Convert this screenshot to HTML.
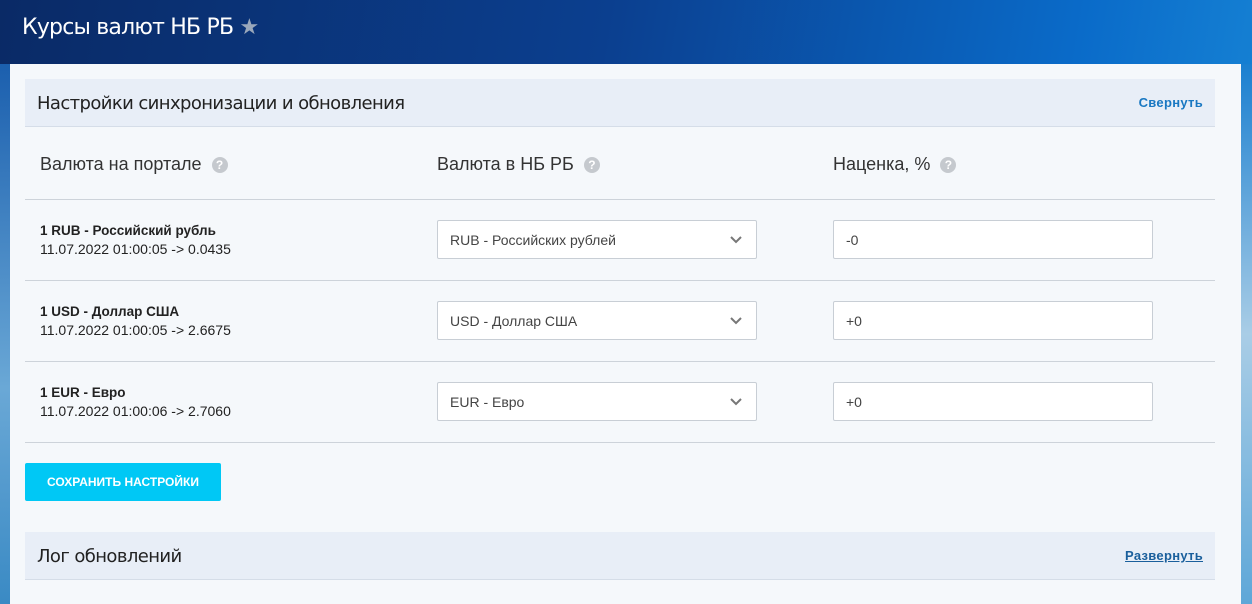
<!DOCTYPE html>
<html><head><meta charset="utf-8"><style>
*{box-sizing:border-box;margin:0;padding:0}
body{width:1252px;height:604px;overflow:hidden;font-family:"Liberation Sans",sans-serif;background:linear-gradient(100deg,#0a2a66 0%,#0b3f8f 45%,#0a6bc9 80%,#1a8ad8 100%);position:relative}
.side{position:absolute;left:0;top:64px;width:10px;height:540px;background:linear-gradient(#1b5fae,#6aa8d6 60%,#3a8ac4)}
.side2{position:absolute;right:0;top:64px;width:11px;height:540px;background:linear-gradient(#1a7fd0,#a9cde6 50%,#5ea7d8)}
h1{position:absolute;left:22px;top:15px;color:#fff;font-weight:normal;font-size:22px;font-family:"DejaVu Sans","Liberation Sans",sans-serif;letter-spacing:-0.8px}
.card{position:absolute;left:10px;top:64px;width:1231px;height:540px;background:#f5f8fb}
.hd{position:absolute;left:15px;width:1190px;height:48px;background:#e8eef7;border-bottom:1px solid #d5dde8}
.hd span{position:absolute;left:12px;top:14px;font-size:18px;color:#222;font-family:"DejaVu Sans",sans-serif;letter-spacing:-0.6px}
.hd a{position:absolute;right:12px;top:16px;font-size:13px;font-weight:bold;color:#1a78c2;letter-spacing:0.3px}
.col{position:absolute;top:90px;font-size:18px;color:#333}
.q{display:inline-block;width:16px;height:16px;border-radius:50%;background:#c5c9ce;color:#fff;font-size:12px;font-weight:bold;text-align:center;line-height:16px;margin-left:10px;vertical-align:1px}
.line{position:absolute;left:15px;width:1190px;height:1px;background:#cdd3da}
.nm{position:absolute;left:30px;font-size:14px;color:#222;line-height:19px}
.nm b{font-weight:bold;font-size:13.5px}
.sel,.inp{position:absolute;width:320px;height:39px;background:#fff;border:1px solid #c8ced5;border-radius:2px;font-size:14px;color:#444;padding:11px 12px}
.sel svg{position:absolute;right:14px;top:15px}
.btn{position:absolute;left:15px;top:399px;width:196px;height:38px;background:#00c8f5;border-radius:2px;color:#fff;font-weight:bold;font-size:12px;text-align:center;line-height:38px}
</style></head><body>
<div class="side"></div><div class="side2"></div>
<h1>Курсы валют НБ РБ <span style="color:#9aa8bb;font-size:22px">★</span></h1>
<div class="card">
<div class="hd" style="top:15px"><span>Настройки синхронизации и обновления</span><a>Свернуть</a></div>
<div class="col" style="left:30px">Валюта на портале<span class="q">?</span></div>
<div class="col" style="left:427px">Валюта в НБ РБ<span class="q">?</span></div>
<div class="col" style="left:823px">Наценка, %<span class="q">?</span></div>
<div class="line" style="top:135px"></div>
<div class="nm" style="top:157px"><b>1 RUB - Российский рубль</b><br>11.07.2022 01:00:05 -&gt; 0.0435</div>
<div class="sel" style="left:427px;top:156px">RUB - Российских рублей<svg width="12" height="8"><path d="M1 1l5 5 5-5" stroke="#777" stroke-width="2" fill="none"/></svg></div>
<div class="inp" style="left:823px;top:156px">-0</div>
<div class="line" style="top:216px"></div>
<div class="nm" style="top:238px"><b>1 USD - Доллар США</b><br>11.07.2022 01:00:05 -&gt; 2.6675</div>
<div class="sel" style="left:427px;top:237px">USD - Доллар США<svg width="12" height="8"><path d="M1 1l5 5 5-5" stroke="#777" stroke-width="2" fill="none"/></svg></div>
<div class="inp" style="left:823px;top:237px">+0</div>
<div class="line" style="top:297px"></div>
<div class="nm" style="top:319px"><b>1 EUR - Евро</b><br>11.07.2022 01:00:06 -&gt; 2.7060</div>
<div class="sel" style="left:427px;top:318px">EUR - Евро<svg width="12" height="8"><path d="M1 1l5 5 5-5" stroke="#777" stroke-width="2" fill="none"/></svg></div>
<div class="inp" style="left:823px;top:318px">+0</div>
<div class="line" style="top:378px"></div>
<div class="btn">СОХРАНИТЬ НАСТРОЙКИ</div>
<div class="hd" style="top:468px"><span>Лог обновлений</span><a style="text-decoration:underline;color:#1a5f9c">Развернуть</a></div>
</div>
</body></html>
